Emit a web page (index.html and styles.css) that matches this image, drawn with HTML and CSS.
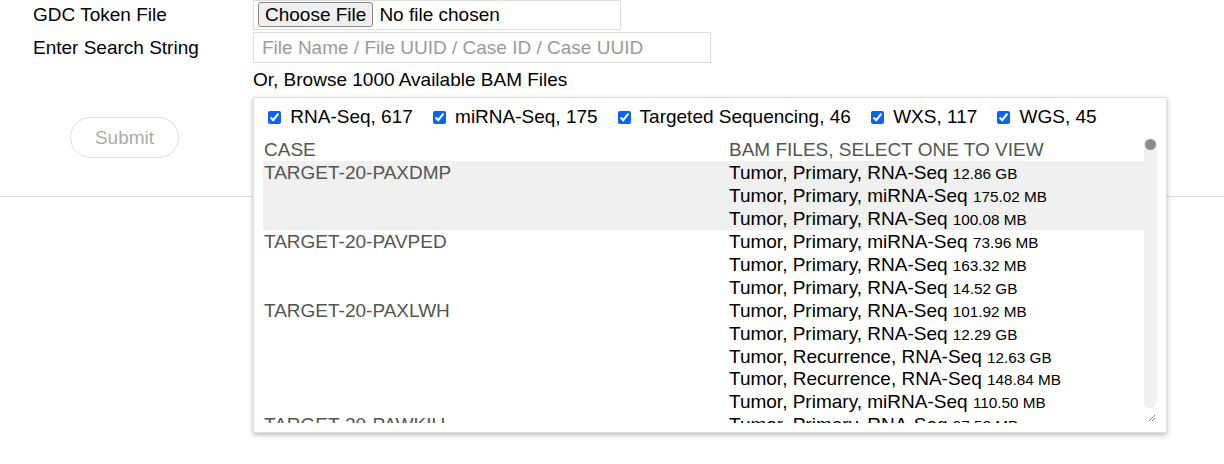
FILE: index.html
```html
<!DOCTYPE html>
<html>
<head>
<meta charset="utf-8">
<link rel="stylesheet" href="styles.css">
</head>
<body>
<div class="form">
  <div class="label">GDC Token File</div>
  <div class="field"><input class="file" type="file"></div>

  <div class="label">Enter Search String</div>
  <div class="field"><input class="search" type="text" placeholder="File Name / File UUID / Case ID / Case UUID"></div>

  <div class="label"></div>
  <div class="field browse">Or, Browse 1000 Available BAM Files</div>

  <div class="label submit-cell"><button class="submit" disabled>Submit</button></div>
  <div class="field anchor">
    <div class="panel">
      <div class="filters">
        <label class="filter"><input type="checkbox" checked> RNA-Seq, 617</label>
        <label class="filter"><input type="checkbox" checked> miRNA-Seq, 175</label>
        <label class="filter"><input type="checkbox" checked> Targeted Sequencing, 46</label>
        <label class="filter"><input type="checkbox" checked> WXS, 117</label>
        <label class="filter"><input type="checkbox" checked> WGS, 45</label>
      </div>
      <div class="scroll">
        <div class="table-wrap">
          <table class="cases">
            <tr class="head"><th class="case">CASE</th><th>BAM FILES, SELECT ONE TO VIEW</th></tr>
            <tr class="hover">
              <td class="case">TARGET-20-PAXDMP</td>
              <td>
                <div class="bam">Tumor, Primary, RNA-Seq <span class="size">12.86 GB</span></div>
                <div class="bam">Tumor, Primary, miRNA-Seq <span class="size">175.02 MB</span></div>
                <div class="bam">Tumor, Primary, RNA-Seq <span class="size">100.08 MB</span></div>
              </td>
            </tr>
            <tr>
              <td class="case">TARGET-20-PAVPED</td>
              <td>
                <div class="bam">Tumor, Primary, miRNA-Seq <span class="size">73.96 MB</span></div>
                <div class="bam">Tumor, Primary, RNA-Seq <span class="size">163.32 MB</span></div>
                <div class="bam">Tumor, Primary, RNA-Seq <span class="size">14.52 GB</span></div>
              </td>
            </tr>
            <tr>
              <td class="case">TARGET-20-PAXLWH</td>
              <td>
                <div class="bam">Tumor, Primary, RNA-Seq <span class="size">101.92 MB</span></div>
                <div class="bam">Tumor, Primary, RNA-Seq <span class="size">12.29 GB</span></div>
                <div class="bam">Tumor, Recurrence, RNA-Seq <span class="size">12.63 GB</span></div>
                <div class="bam">Tumor, Recurrence, RNA-Seq <span class="size">148.84 MB</span></div>
                <div class="bam">Tumor, Primary, miRNA-Seq <span class="size">110.50 MB</span></div>
              </td>
            </tr>
            <tr>
              <td class="case">TARGET-20-PAWKIU</td>
              <td>
                <div class="bam">Tumor, Primary, RNA-Seq <span class="size">97.53 MB</span></div>
                <div class="bam">Tumor, Primary, miRNA-Seq <span class="size">80.11 MB</span></div>
              </td>
            </tr>
          </table>
        </div>
        <div class="track-col">
          <div class="track"><div class="thumb"></div></div>
          <div class="grip">
            <svg width="13" height="12" viewBox="0 0 13 12"><path d="M5 10 L11 4 M8 10 L11 7" stroke="#888" stroke-width="1" fill="none"/></svg>
          </div>
        </div>
      </div>
    </div>
  </div>
</div>
<div class="rule"></div>
</body>
</html>
```
FILE: styles.css
```css
html, body {
  margin: 0;
  padding: 0;
  background: #fff;
  font-family: "Liberation Sans", Arial, Helvetica, sans-serif;
  font-size: 19px;
  color: #000;
}

body {
  min-height: 464px;
}

.form {
  display: grid;
  grid-template-columns: 220px 1fr;
  row-gap: 2px;
  padding-left: 33px;
  align-items: center;
}

.label {
  line-height: 22px;
}

.file {
  box-sizing: border-box;
  width: 368px;
  height: 30px;
  border: 1px solid #ddd;
  padding: 1px 2px 2px 4px;
  font-family: "Liberation Sans", Arial, sans-serif;
  font-size: 19px;
  color: #000;
}

.file::file-selector-button {
  font-family: "Liberation Sans", Arial, sans-serif;
  font-size: 19px;
  height: 25px;
  padding: 0 6px;
  margin-right: 6px;
  background: #efefef;
  border: 1px solid #8a8a8a;
  border-radius: 3px;
  color: #000;
}

.search {
  box-sizing: border-box;
  width: 458px;
  height: 31px;
  border: 1px solid #ddd;
  padding: 0 8px;
  font-family: "Liberation Sans", Arial, sans-serif;
  font-size: 19px;
  outline: none;
}

.search::placeholder {
  color: #9a9a9a;
}

.browse {
  line-height: 22px;
  padding: 4px 0 4px;
}

.submit-cell {
  align-self: start;
}

.submit {
  margin: 20px 0 0 37px;
  box-sizing: border-box;
  width: 109px;
  height: 41px;
  border: 1px solid #ddd;
  border-radius: 21px;
  background: #fff;
  color: #aaa;
  font-family: "Liberation Sans", Arial, sans-serif;
  font-size: 19px;
}

.anchor {
  position: relative;
  align-self: stretch;
}

.panel {
  position: absolute;
  left: 0;
  top: 0;
  z-index: 2;
  box-sizing: border-box;
  width: 914px;
  height: 336px;
  padding: 8px 9px 9px 9px;
  background: #fff;
  border: 1px solid #e0e0e0;
  box-shadow: 0 2px 5px rgba(0, 0, 0, 0.28);
}

.filters {
  display: flex;
  align-items: center;
  height: 22px;
  line-height: 22px;
  margin-bottom: 10px;
}

.filter {
  display: flex;
  align-items: center;
  margin-right: 15px;
  white-space: pre;
}

.filter input {
  width: 13px;
  height: 13px;
  margin: 0 4px 0 5px;
  accent-color: #0a63f2;
}

.scroll {
  display: flex;
  height: 285px;
}

.table-wrap {
  flex: 1;
  overflow: hidden;
}

.cases {
  width: 100%;
  border-collapse: collapse;
  line-height: 22.6px;
}

.cases th,
.cases td {
  padding: 1px 1px 0.2px;
  text-align: left;
  vertical-align: top;
  font-weight: normal;
}

.cases th {
  color: #555;
  padding: 0.8px 1px 0;
  height: 22.2px;
  box-sizing: border-box;
}

.cases .case {
  width: 463px;
  color: #555;
}

.cases tr.hover td {
  background: #f0f0f0;
}

.bam {
  height: 22.6px;
  white-space: nowrap;
}

.size {
  font-size: 15.3px;
  line-height: 15px;
}

.track-col {
  width: 13px;
  display: flex;
  flex-direction: column;
}

.track {
  flex: 1;
  margin-top: 1px;
  margin-bottom: 3px;
  background: #f0f0f0;
  border-radius: 6px;
}

.thumb {
  width: 11px;
  height: 11px;
  margin-left: 1px;
  border-radius: 50%;
  background: #8c8c8c;
}

.grip {
  height: 12px;
}

.grip svg {
  display: block;
}

.rule {
  margin-top: 38px;
  border-top: 1px solid #ddd;
}
```
